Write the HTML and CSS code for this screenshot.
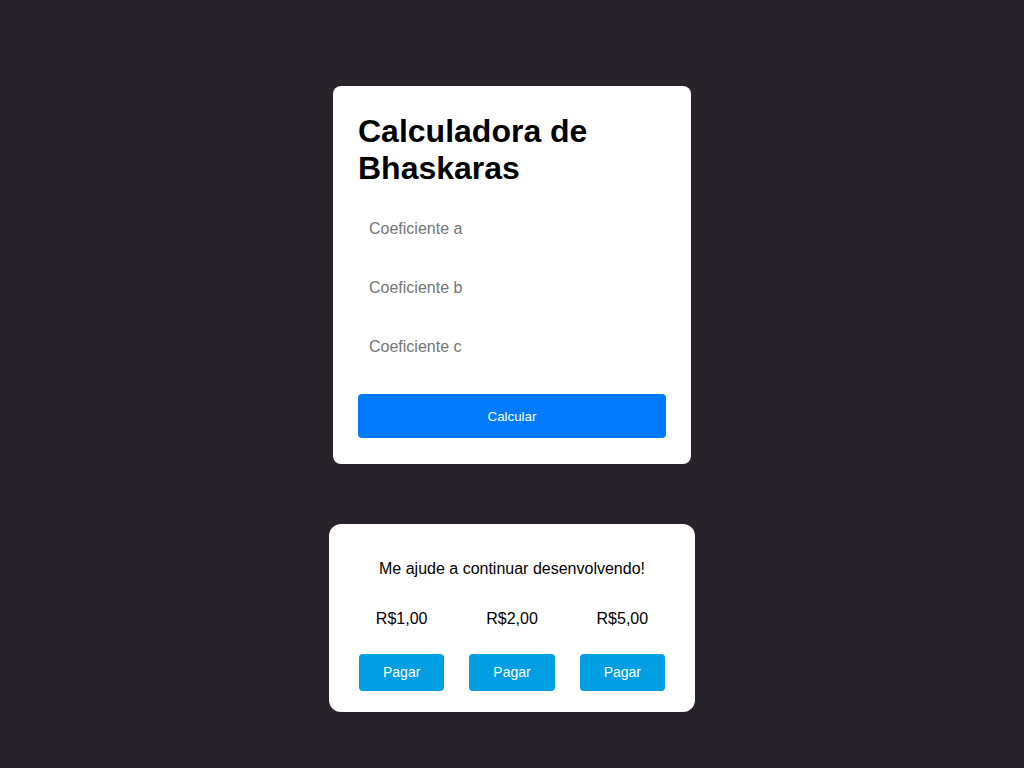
FILE: index.html
```html
<!DOCTYPE html>
<html lang="pt-BR">
<head>
<meta charset="utf-8">
<title>Calculadora de Bhaskaras</title>
<link rel="stylesheet" href="styles.css">
</head>
<body>
<main class="page">
  <section class="calc-card">
    <h1 class="calc-title">Calculadora de Bhaskaras</h1>
    <div class="fields">
      <input class="field" type="number" placeholder="Coeficiente a">
      <input class="field" type="number" placeholder="Coeficiente b">
      <input class="field" type="number" placeholder="Coeficiente c">
    </div>
    <button class="calc-btn" type="button">Calcular</button>
  </section>

  <section class="donate-card">
    <p class="donate-text">Me ajude a continuar desenvolvendo!</p>
    <div class="donate-grid">
      <div class="donate-item">
        <span class="price">R$1,00</span>
        <button class="pay-btn" type="button">Pagar</button>
      </div>
      <div class="donate-item">
        <span class="price">R$2,00</span>
        <button class="pay-btn" type="button">Pagar</button>
      </div>
      <div class="donate-item">
        <span class="price">R$5,00</span>
        <button class="pay-btn" type="button">Pagar</button>
      </div>
    </div>
  </section>
</main>
</body>
</html>
```

FILE: styles.css
```css
* { box-sizing: border-box; }

html, body {
  margin: 0;
  padding: 0;
  background: #28232a;
  font-family: "Liberation Sans", Arial, sans-serif;
}

.page {
  min-height: 768px;
  display: flex;
  flex-direction: column;
  align-items: center;
  padding-top: 86px;
}

.calc-card {
  width: 358px;
  background: #fff;
  border-radius: 8px;
  padding: 27px 25px 26px 25px;
}

.calc-title {
  margin: 0;
  font-size: 32px;
  line-height: 36.8px;
  font-weight: 700;
  color: #000;
}

.fields {
  display: flex;
  flex-direction: column;
  gap: 20px;
  margin-top: 23px;
}

.field {
  display: block;
  width: 100%;
  height: 39px;
  padding: 0 10px;
  border: 1px solid transparent;
  font-family: "Liberation Sans", Arial, sans-serif;
  font-size: 16px;
  color: #000;
  background: #fff;
  outline: none;
}

.field::placeholder { color: #757575; }

.calc-btn {
  display: block;
  width: 100%;
  height: 44px;
  margin-top: 27px;
  padding: 2px 0 0;
  border: none;
  border-radius: 4px;
  background: #007bff;
  color: #fff;
  font-family: "Liberation Sans", Arial, sans-serif;
  font-size: 13.33px;
}

.donate-card {
  width: 366px;
  margin-top: 60px;
  background: #fff;
  border-radius: 12px;
  padding: 35px 30px 21px;
}

.donate-text {
  margin: 0;
  text-align: center;
  font-size: 16px;
  line-height: 19px;
  color: #000;
}

.donate-grid {
  display: grid;
  grid-template-columns: repeat(3, 1fr);
  column-gap: 25px;
  margin-top: 31px;
}

.donate-item {
  display: flex;
  flex-direction: column;
  align-items: stretch;
}

.price {
  text-align: center;
  font-size: 16px;
  line-height: 19px;
  color: #000;
}

.pay-btn {
  margin-top: 26px;
  height: 37px;
  border: none;
  border-radius: 4px;
  background: #009fe3;
  color: #fff;
  font-family: "Liberation Sans", Arial, sans-serif;
  font-size: 14px;
}
```
